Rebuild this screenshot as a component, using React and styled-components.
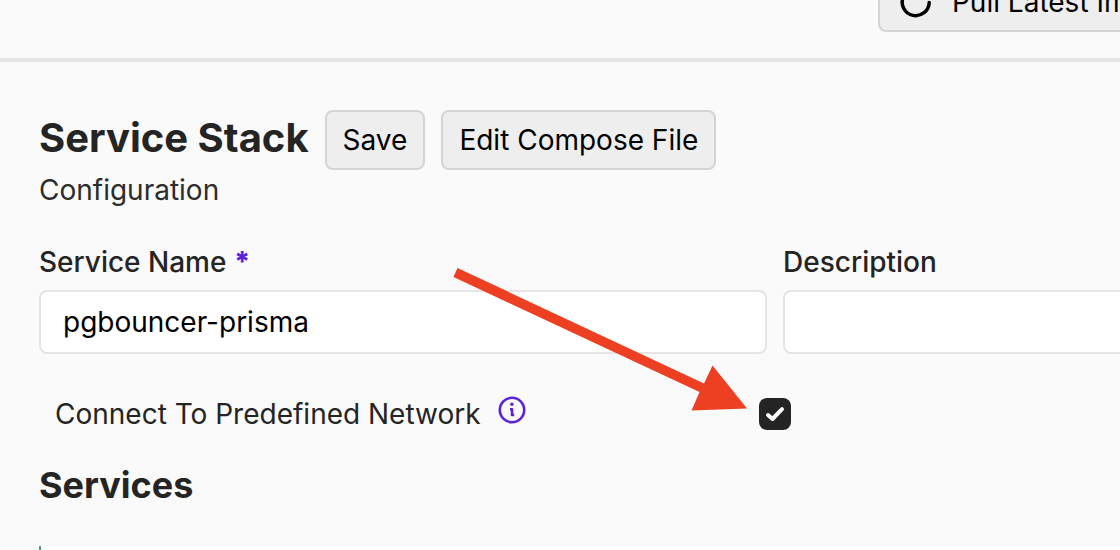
import React from "react";
import styled, { createGlobalStyle } from "styled-components";

const GlobalStyle = createGlobalStyle`
  *, *::before, *::after { box-sizing: border-box; }
  html { height: 100%; }
  body {
    margin: 0;
    height: 100%;
    overflow: hidden;
    background: #fafafa;
    color: #242424;
    font-family: Inter, "Liberation Sans", sans-serif;
    font-size: 28px;
    line-height: 40px;
    font-optical-sizing: none;
  }
  h1, h2, p { margin: 0; }
`;

const Page = styled.div`
  position: relative;
  width: 100%;
  overflow: hidden;
`;

const Canvas = styled.div`
  display: flex;
  flex-direction: column;
  width: 138.5%;
  min-height: 100vh;
`;

const TopBar = styled.header`
  display: flex;
  align-items: flex-end;
  height: 62px;
  padding: 0 0 26px 56.6%;
  border-bottom: 4px solid #e5e5e5;
`;

const Button = styled.button`
  display: inline-flex;
  align-items: center;
  flex-shrink: 0;
  gap: 20px;
  height: 60px;
  padding: 0 16px;
  border: 2px solid #d4d4d4;
  border-radius: 8px;
  background: #eeeeee;
  color: #000;
  font: inherit;
  white-space: nowrap;
`;

const WideButton = styled(Button)`
  padding: 0 20px;
`;

const Content = styled.main`
  display: flex;
  flex: 1;
  flex-direction: column;
  padding: 48px 40px 0 39px;
`;

const TitleRow = styled.div`
  display: flex;
  align-items: flex-start;
  gap: 16px;
`;

const Title = styled.h1`
  font-size: 40px;
  line-height: 56px;
  font-weight: 700;
`;

const Subtitle = styled.p`
  color: #2c2c2c;
`;

const Fields = styled.div`
  display: grid;
  grid-template-columns: 1fr 1fr;
  gap: 16px;
  margin-top: 32px;
`;

const Field = styled.div`
  display: flex;
  flex-direction: column;
  gap: 8px;
`;

const Label = styled.label`
  font-weight: 500;
`;

const Required = styled.span`
  color: #5b22dc;
  font-weight: 800;
`;

const TextInput = styled.input`
  width: 100%;
  height: 64px;
  padding: 0 22px;
  border: 2px solid #e5e5e5;
  border-radius: 8px;
  background: #fff;
  color: #000;
  font: inherit;
  outline: none;
`;

const CheckRow = styled.div`
  display: grid;
  grid-template-columns: 1fr 1fr;
  align-items: center;
  margin-top: 40px;
`;

const CheckLabel = styled.label`
  display: flex;
  align-items: flex-start;
  gap: 17px;
  padding-left: 16px;
`;

const CheckHolder = styled.span`
  display: grid;
  width: 32px;
  height: 32px;
  margin-left: -16px;

  & > * { grid-area: 1 / 1; }
  svg { pointer-events: none; }
`;

const Checkbox = styled.input`
  appearance: none;
  width: 32px;
  height: 32px;
  margin: 0;
  border-radius: 8px;
  background: #fff;

  &:checked { background: #242424; }
`;

const SectionTitle = styled.h2`
  margin-top: 30px;
  font-size: 36px;
  line-height: 42px;
  font-weight: 700;
`;

const ServiceCard = styled.section`
  flex: 1;
  margin-top: 40px;
  border-left: 2px solid #4f9b78;
  background: #fff;
`;

const Pointer = styled.svg`
  position: absolute;
  left: 450px;
  top: 262px;
  pointer-events: none;
`;

function ReloadIcon() {
  return (
    <svg width="32" height="32" viewBox="0 0 32 32" fill="none" stroke="#000" strokeWidth="3.500" strokeLinecap="round" aria-hidden="true">
      <path d="M29.200 16.500A13.500 13.500 0 1 1 23 4.800" />
    </svg>
  );
}

function InfoIcon() {
  return (
    <svg width="28" height="32" viewBox="0 0 28 32" fill="none" stroke="#5b22dc" aria-hidden="true">
      <circle cx="14" cy="16" r="12.200" strokeWidth="2.600" />
      <circle cx="13.900" cy="10.300" r="1.700" fill="#5b22dc" stroke="none" />
      <path d="M12 15.200h2v5.800h2.200" strokeWidth="2.600" strokeLinejoin="round" />
    </svg>
  );
}

export default function App() {
  return (
    <>
      <GlobalStyle />
      <Page>
        <Canvas>
          <TopBar>
            <WideButton type="button">
              <ReloadIcon />
              Pull Latest Images &amp; Restart
            </WideButton>
          </TopBar>
          <Content>
            <TitleRow>
              <Title>Service Stack</Title>
              <Button type="button">Save</Button>
              <Button type="button">Edit Compose File</Button>
            </TitleRow>
            <Subtitle>Configuration</Subtitle>
            <Fields>
              <Field>
                <Label htmlFor="service-name">
                  Service Name <Required>*</Required>
                </Label>
                <TextInput id="service-name" defaultValue="pgbouncer-prisma" required />
              </Field>
              <Field>
                <Label htmlFor="description">Description</Label>
                <TextInput id="description" />
              </Field>
            </Fields>
            <CheckRow>
              <CheckLabel htmlFor="predefined-network">
                Connect To Predefined Network
                <InfoIcon />
              </CheckLabel>
              <CheckHolder>
                <Checkbox id="predefined-network" type="checkbox" defaultChecked />
                <svg width="32" height="32" viewBox="0 0 32 32" fill="none" stroke="#fff" strokeWidth="4" strokeLinecap="round" strokeLinejoin="round" aria-hidden="true">
                  <path d="M9 17L13.500 21L23 11.200" />
                </svg>
              </CheckHolder>
            </CheckRow>
            <SectionTitle>Services</SectionTitle>
            <ServiceCard />
          </Content>
        </Canvas>
        <Pointer width="300" height="152" viewBox="450 262 300 152" aria-hidden="true">
          <path d="M457.500 268L704 383.500L712.500 365.500L747 408.500L691.500 410.500L699.500 392L453.500 277Z" fill="#ed4023" />
        </Pointer>
      </Page>
    </>
  );
}
